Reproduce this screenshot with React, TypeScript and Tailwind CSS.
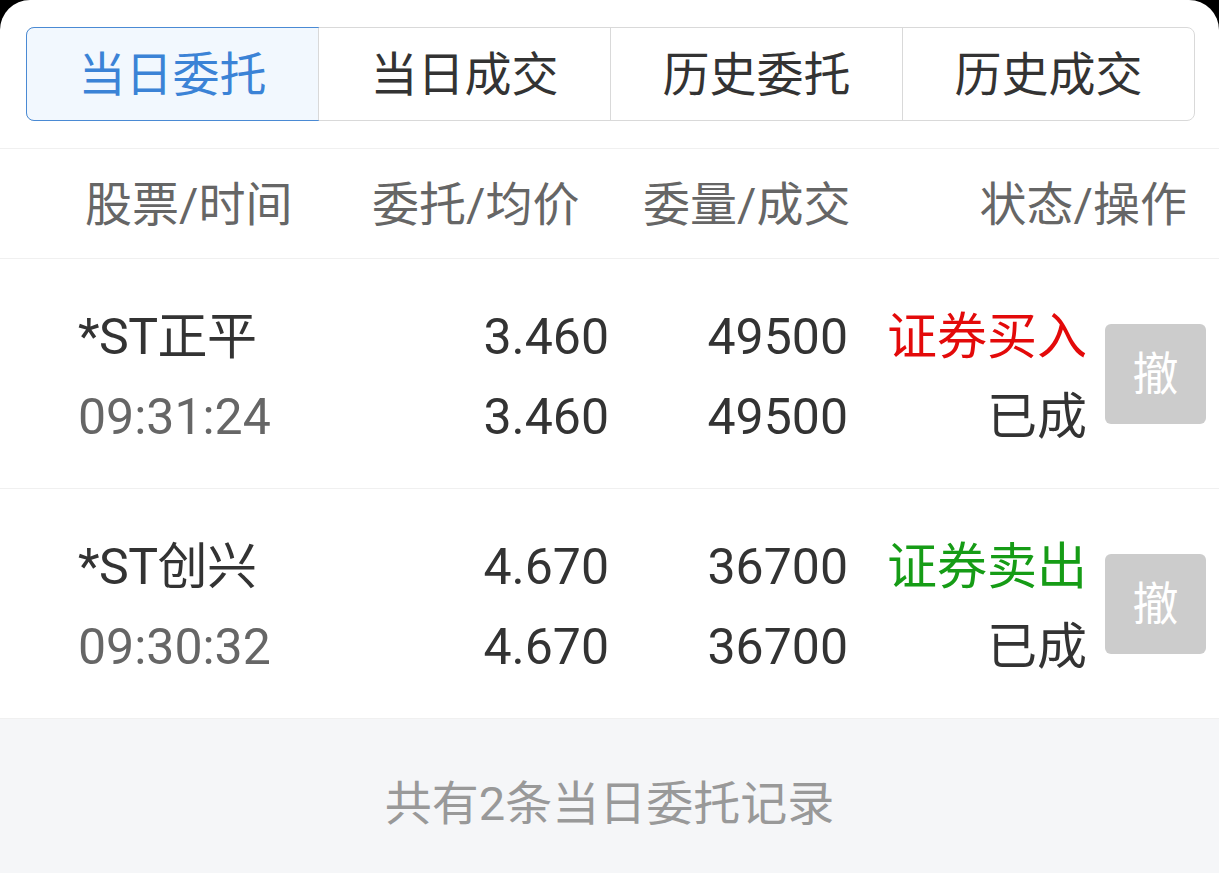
import React from 'react';

const tabs = ['当日委托', '当日成交', '历史委托', '历史成交'];

const orders = [
  { name: '*ST正平', time: '09:31:24', price: '3.460', avg: '3.460', qty: '49500', deal: '49500', side: '证券买入', buy: true, status: '已成' },
  { name: '*ST创兴', time: '09:30:32', price: '4.670', avg: '4.670', qty: '36700', deal: '36700', side: '证券卖出', buy: false, status: '已成' },
];

export default function App() {
  return (
    <div className="bg-black min-h-screen font-['Roboto','Noto_Sans_CJK_SC',sans-serif]">
      <div className="bg-white rounded-t-[30px] h-[873px] flex flex-col overflow-hidden">
        {/* tab bar */}
        <div className="pt-[27px] pb-[27px] pl-[26px] pr-[24px] border-b border-[#f0f0f0]">
          <div className="flex h-[94px] border border-[#d9d9d9] rounded-[8px]">
            {tabs.map((t, i) => (
              <div
                key={t}
                className={
                  i === 0
                    ? 'flex-1 flex items-center justify-center pt-[2px] text-[47px] text-[#3b83d6] bg-[#f2f8fe] border border-[#4a8ad4] -m-px rounded-l-[8px]'
                    : 'flex-1 flex items-center justify-center pt-[2px] text-[47px] text-[#333] border-l border-[#d9d9d9]'
                }
              >
                {t}
              </div>
            ))}
          </div>
        </div>

        {/* column header */}
        <div className="flex items-center h-[110px] pt-[4px] border-b border-[#f0f0f0] text-[47px] text-[#666]">
          <div className="w-[372px] pl-[85px]">股票/时间</div>
          <div className="w-[271px]">委托/均价</div>
          <div className="w-[205px] text-right whitespace-nowrap">委量/成交</div>
          <div className="flex-1 text-right pr-[32px]">状态/操作</div>
        </div>

        {orders.map((o) => (
          <div key={o.name} className="flex items-center h-[230px] border-b border-[#f0f0f0] text-[50px] leading-[80px] text-[#333]">
            <div className="w-[400px] pl-[78px] pt-[6px]">
              <div className="tracking-[-0.5px]">{o.name}</div>
              <div className="text-[#666]">{o.time}</div>
            </div>
            <div className="w-[209px] text-right pt-[6px]">
              <div>{o.price}</div>
              <div>{o.avg}</div>
            </div>
            <div className="w-[239px] text-right pt-[6px]">
              <div>{o.qty}</div>
              <div>{o.deal}</div>
            </div>
            <div className="w-[239px] text-right pt-[6px]">
              <div className={o.buy ? 'text-[#e30a0a]' : 'text-[#169c16]'}>{o.side}</div>
              <div>{o.status}</div>
            </div>
            <div className="ml-[18px] w-[101px] h-[100px] rounded-[6px] bg-[#cccccc] text-white text-[46px] flex items-center justify-center">
              撤
            </div>
          </div>
        ))}

        <div className="flex-1 bg-[#f5f6f8] flex items-center justify-center pt-[16px] text-[47px] text-[#999]">
          共有2条当日委托记录
        </div>
      </div>
    </div>
  );
}
